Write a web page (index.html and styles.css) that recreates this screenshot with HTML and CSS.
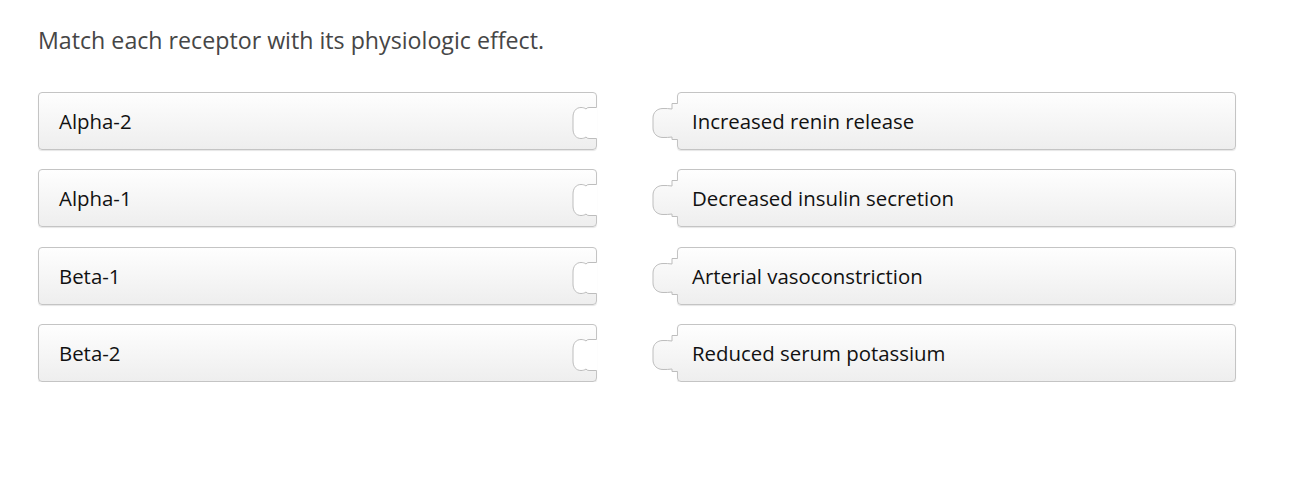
FILE: index.html
```html
<!DOCTYPE html>
<html lang="en">
<head>
<meta charset="utf-8">
<title>Match each receptor</title>
<link rel="stylesheet" href="styles.css">
</head>
<body>
<svg width="0" height="0" class="defs" aria-hidden="true">
  <defs>
    <linearGradient id="cardgrad" gradientUnits="userSpaceOnUse" x1="0" y1="0" x2="0" y2="58">
      <stop offset="0" stop-color="#fefefe"/>
      <stop offset="1" stop-color="#eeeeee"/>
    </linearGradient>
    <symbol id="notch" viewBox="-29.5 0 30 58">
      <path class="nfill" d="M1,15.5 H-7.5 Q-9.5,15.5 -10.5,17 C-12,15.8 -14,15.5 -15.5,15.5 C-20.5,15.5 -23.5,19.5 -23.5,25 V37 C-23.5,42.5 -20.5,46.5 -15.5,46.5 C-14,46.5 -12,46.2 -10.5,45 Q-9.5,46.5 -7.5,46.5 H1 Z"/>
      <path class="nline" d="M0,15.5 H-7.5 Q-9.5,15.5 -10.5,17 C-12,15.8 -14,15.5 -15.5,15.5 C-20.5,15.5 -23.5,19.5 -23.5,25 V37 C-23.5,42.5 -20.5,46.5 -15.5,46.5 C-14,46.5 -12,46.2 -10.5,45 Q-9.5,46.5 -7.5,46.5 H0"/>
    </symbol>
    <symbol id="tab" viewBox="-0.5 0 30 58">
      <path class="tfill" d="M30,11.5 H23.5 V17 C20.5,16.5 17.5,16.5 14.5,16.5 C8.5,16.5 4.5,20.5 4.5,26 V36 C4.5,41.5 8.5,45.5 14.5,45.5 C17.5,45.5 20.5,45.5 23.5,45 V47.5 H30 Z"/>
      <path class="tline" d="M29,11.5 H23.5 V17 C20.5,16.5 17.5,16.5 14.5,16.5 C8.5,16.5 4.5,20.5 4.5,26 V36 C4.5,41.5 8.5,45.5 14.5,45.5 C17.5,45.5 20.5,45.5 23.5,45 V47.5 H29"/>
    </symbol>
  </defs>
</svg>
<main class="page">
  <h1 class="prompt">Match each receptor with its physiologic effect.</h1>
  <div class="board">
    <div class="row">
      <div class="card card-left"><span>Alpha-2</span><svg class="notch"><use href="#notch"/></svg></div>
      <div class="card card-right"><svg class="tab"><use href="#tab"/></svg><span>Increased renin release</span></div>
    </div>
    <div class="row">
      <div class="card card-left"><span>Alpha-1</span><svg class="notch"><use href="#notch"/></svg></div>
      <div class="card card-right"><svg class="tab"><use href="#tab"/></svg><span>Decreased insulin secretion</span></div>
    </div>
    <div class="row">
      <div class="card card-left"><span>Beta-1</span><svg class="notch"><use href="#notch"/></svg></div>
      <div class="card card-right"><svg class="tab"><use href="#tab"/></svg><span>Arterial vasoconstriction</span></div>
    </div>
    <div class="row">
      <div class="card card-left"><span>Beta-2</span><svg class="notch"><use href="#notch"/></svg></div>
      <div class="card card-right"><svg class="tab"><use href="#tab"/></svg><span>Reduced serum potassium</span></div>
    </div>
  </div>
</main>
</body>
</html>
```
FILE: styles.css
```css
html, body {
  margin: 0;
  padding: 0;
  background: #ffffff;
}

.defs {
  position: absolute;
  width: 0;
  height: 0;
  overflow: hidden;
}

.page {
  padding: 24px 0 0 38px;
  font-family: "Open Sans", "Noto Sans", sans-serif;
}

.prompt {
  margin: 0;
  font-size: 23.2px;
  font-weight: 400;
  line-height: 32px;
  color: #464646;
}

.board {
  margin-top: 36px;
  display: flex;
  flex-direction: column;
  gap: 19.3px;
}

.row {
  display: flex;
  gap: 80px;
}

.card {
  position: relative;
  box-sizing: border-box;
  width: 559px;
  height: 58px;
  border: 1px solid #c4c4c4;
  border-radius: 4px;
  background: linear-gradient(#fefefe, #eeeeee);
  box-shadow: 0 1px 1px rgba(0, 0, 0, 0.1);
  display: flex;
  align-items: center;
  font-size: 20.4px;
  color: #111111;
}

.card-left {
  padding-left: 20px;
}

.card-right {
  padding-left: 14px;
}

.notch {
  position: absolute;
  top: -1px;
  right: -1px;
  width: 30px;
  height: 58px;
}

.tab {
  position: absolute;
  top: -1px;
  left: -30px;
  width: 30px;
  height: 58px;
}

.nfill {
  fill: #ffffff;
}

.nline, .tline {
  fill: none;
  stroke: #bdbdbd;
  stroke-width: 1;
}

.tfill {
  fill: url(#cardgrad);
}
```
